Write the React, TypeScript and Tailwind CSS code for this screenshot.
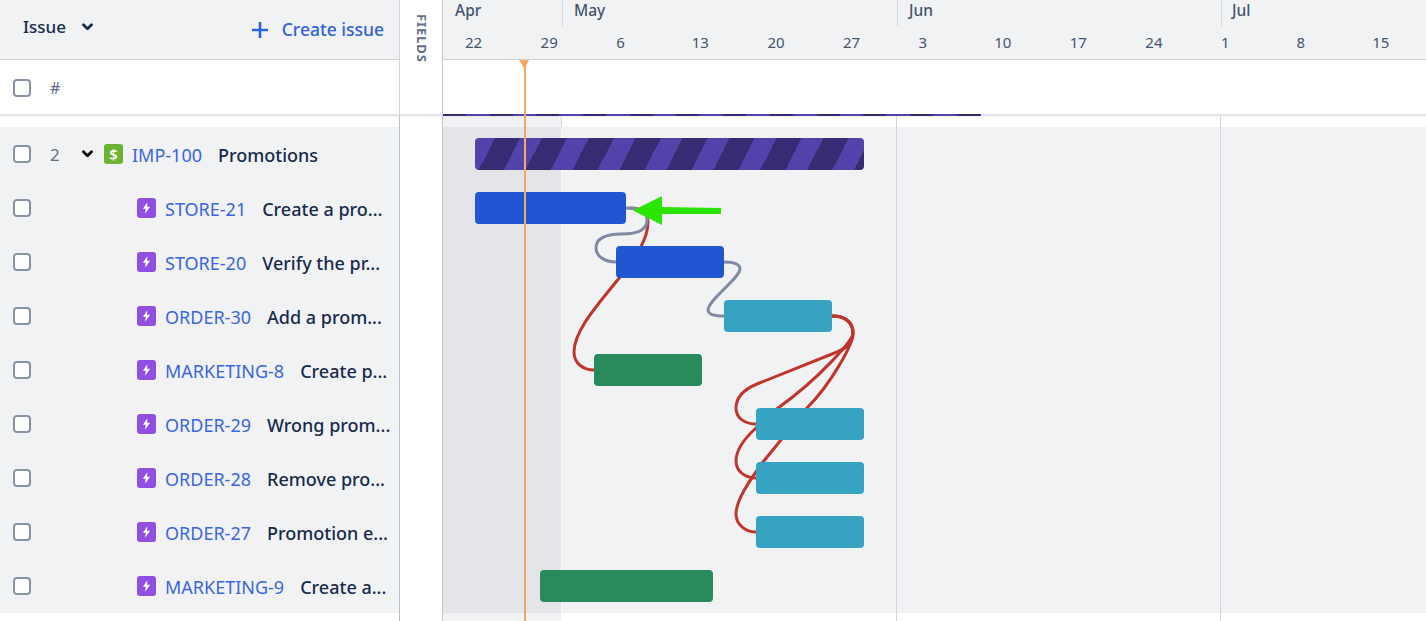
import React from "react";

const font = { fontFamily: '"Noto Sans", sans-serif' };

function Check() {
  return <span className="block w-[18px] h-[18px] rounded-[4px] border-2 border-[#8993a8] bg-white shrink-0" />;
}

function Chevron({ className }: { className: string }) {
  return (
    <svg viewBox="0 0 12 8" className={className} fill="none" stroke="currentColor" strokeWidth="3" strokeLinecap="round" strokeLinejoin="round">
      <path d="M1.6 1.6 L6 6 L10.4 1.6" />
    </svg>
  );
}

function Bolt() {
  return (
    <span className="w-[19px] h-[20px] rounded-[3px] bg-[#904ee2] flex items-center justify-center shrink-0">
      <svg viewBox="0 0 10 14" className="w-[9px] h-[12px]" fill="#fff">
        <path d="M6 0.4 L0.8 7.8 H4 L3.4 13.6 L9.2 5.6 H5.6 Z" />
      </svg>
    </span>
  );
}

const issues = [
  { k: "STORE-21", t: "Create a pro..." },
  { k: "STORE-20", t: "Verify the pr..." },
  { k: "ORDER-30", t: "Add a prom..." },
  { k: "MARKETING-8", t: "Create p..." },
  { k: "ORDER-29", t: "Wrong prom..." },
  { k: "ORDER-28", t: "Remove pro..." },
  { k: "ORDER-27", t: "Promotion e..." },
  { k: "MARKETING-9", t: "Create a..." },
];

const days = ["22", "29", "6", "13", "20", "27", "3", "10", "17", "24", "1", "8", "15"];

const stripe = "bg-[repeating-linear-gradient(117deg,#5243aa_0px,#5243aa_17.8px,#352c73_17.8px,#352c73_40.2px,#5243aa_40.2px,#5243aa_41.8px)]";

const bars = [
  { ml: "ml-[32px]", w: "w-[389px]", c: stripe },
  { ml: "ml-[32px]", w: "w-[151px]", c: "bg-[#2056d2]" },
  { ml: "ml-[173px]", w: "w-[108px]", c: "bg-[#2056d2]" },
  { ml: "ml-[281px]", w: "w-[108px]", c: "bg-[#37a3c2]" },
  { ml: "ml-[151px]", w: "w-[108px]", c: "bg-[#298a5c]" },
  { ml: "ml-[313px]", w: "w-[108px]", c: "bg-[#37a3c2]" },
  { ml: "ml-[313px]", w: "w-[108px]", c: "bg-[#37a3c2]" },
  { ml: "ml-[313px]", w: "w-[108px]", c: "bg-[#37a3c2]" },
  { ml: "ml-[97px]", w: "w-[173px]", c: "bg-[#298a5c]" },
];

const months = [
  { m: "Apr", c: "w-[119px] pl-[12px]" },
  { m: "May", c: "w-[335px] pl-[11px] border-l border-[#d5d7de]" },
  { m: "Jun", c: "w-[324px] pl-[11px] border-l border-[#d5d7de]" },
  { m: "Jul", c: "w-[205px] pl-[10px] border-l border-[#d5d7de]" },
];

function Left() {
  return (
    <div className="w-[400px] shrink-0 border-r border-[#b9bdc9] h-full flex flex-col">
      <div className="h-[60px] bg-[#f1f2f4] border-b border-[#d0d2da] flex items-center pl-[23px] pr-[15px] shrink-0">
        <span className="text-[17px] font-medium text-[#172b4d] -mt-[6px]">Issue</span>
        <Chevron className="w-[11px] h-[8px] ml-[16px] -mt-[6px] text-[#172b4d]" />
        <svg viewBox="0 0 16 16" className="w-[16px] h-[16px] ml-auto" fill="none" stroke="#2f62e0" strokeWidth="2.6">
          <path d="M8 0 V16 M0 8 H16" />
        </svg>
        <span className="ml-[14px] text-[17.5px] font-medium text-[#2f62e0]">Create issue</span>
      </div>
      <div className="h-[55px] bg-white flex items-center pl-[13px] shrink-0">
        <Check />
        <span className="ml-[19px] text-[16px] text-[#626f86]">#</span>
      </div>
      <div className="h-[12px] bg-white shrink-0" />
      <div className="h-[54px] bg-[#f1f2f4] flex items-center pl-[13px] shrink-0">
        <Check />
        <span className="ml-[19px] w-[32px] text-[17px] text-[#626f86] pt-[2px]">2</span>
        <Chevron className="w-[11px] h-[8px] text-black" />
        <span className="ml-[11px] w-[19px] h-[20px] rounded-[3px] bg-[#6ab42f] flex items-center justify-center text-white text-[15px] font-semibold leading-none shrink-0">$</span>
        <span className="ml-[9px] text-[18px] text-[#3a66e3] whitespace-nowrap pt-[2px]">IMP-100</span>
        <span className="ml-[16px] text-[18px] font-medium text-[#172b4d] whitespace-nowrap pt-[2px]">Promotions</span>
      </div>
      {issues.map((r) => (
        <div key={r.k} className="h-[54px] bg-[#f1f2f4] flex items-center pl-[13px] shrink-0">
          <Check />
          <span className="ml-[106px]"><Bolt /></span>
          <span className="ml-[9px] text-[18px] text-[#3a66e3] whitespace-nowrap pt-[2px]">{r.k}</span>
          <span className="ml-[16px] text-[18px] font-medium text-[#172b4d] whitespace-nowrap pt-[2px]">{r.t}</span>
        </div>
      ))}
    </div>
  );
}

function Fields() {
  return (
    <div className="w-[43px] shrink-0 border-r border-[#c4c7d1] h-full bg-white flex flex-col">
      <div className="h-[60px] flex justify-center pt-[14px] pl-[1px]">
        <span className="[writing-mode:vertical-rl] text-[13px] font-bold tracking-[0.9px] text-[#626f86] leading-none">FIELDS</span>
      </div>
    </div>
  );
}

function BarRows() {
  return (
    <>
      {bars.map((b, i) => (
        <div key={i} className="h-[54px] flex items-center relative">
          <div className={`${b.ml} ${b.w} ${b.c} h-[32px] rounded-[4px]`} />
        </div>
      ))}
    </>
  );
}

function Chart() {
  return (
    <div className="flex-1 h-full relative overflow-hidden">
      {/* header */}
      <div className="h-[60px] bg-[#f1f2f4] border-b border-[#d0d2da] flex flex-col">
        <div className="flex h-[26px]">
          {months.map(({ m, c }) => (
            <div key={m} className={`${c} text-[15.5px] font-medium text-[#44546f] leading-[21px]`}>{m}</div>
          ))}
        </div>
        <div className="flex pl-[22px] pt-[6px]">
          {days.map((d, i) => (
            <span key={i} className="w-[75.6px] shrink-0 text-[15px] text-[#44546f] leading-[21px]">{d}</span>
          ))}
        </div>
      </div>
      <div className="h-[67px] bg-white" />

      {/* rows area */}
      <div className="relative bg-[#f1f2f4] h-[486px]">
        <div className="absolute left-0 top-0 bottom-0 w-[118px] bg-[#e4e5e9]" />
      </div>
      <div className="h-[8px] bg-white" />
      <div className="absolute left-0 top-[613px] w-[118px] h-[8px] bg-[#f1f2f4]" />
      <div className="absolute left-0 top-[115px] w-[118px] h-[12px] bg-[#f1f2f4]" />

      {/* month grid lines */}
      <div className="absolute left-[118px] top-[115px] h-[12px] w-px bg-[#d5d6dc]" />
      <div className="absolute left-[118px] top-[127px] bottom-0 w-px bg-[#fafafb]" />
      <div className="absolute left-[453px] top-[115px] bottom-0 w-px bg-[#d5d6dc]" />
      <div className="absolute left-[777px] top-[115px] bottom-0 w-px bg-[#d5d6dc]" />

      {/* links */}
      <svg className="absolute left-0 top-0 w-[983px] h-[621px]" viewBox="443 0 983 621" fill="none" strokeWidth="3" strokeLinecap="round">
        <g stroke="#c1352a">
          <path d="M630 208 C 641 208 648 212 648 222 C 648 240 635 258 620 277 C 600 302 574 330 574 352 C 574 364 584 370 594 370" />
          <path d="M832 316 C 846 316 853 323 853 333 C 853 345 845 349 832 354 L 757 384 C 745 389 736 397 736 408 C 736 419 746 424 756 424" />
          <path d="M832 316 C 846 316 853 323 853 333 C 853 340 820 378 778 408 L 756 428 C 745 438 736 450 736 461 C 736 472 746 478 756 478" />
          <path d="M832 316 C 846 316 853 323 853 333 C 853 345 830 385 807 408 L 763 462 C 750 480 736 500 736 514 C 736 525 746 532 756 532" />
        </g>
        <g stroke="#7f8ba2">
          <path d="M626 208 C 640 208 647 212 647 220 C 647 232 632 234 622 234 C 605 234 596 238 596 248 C 596 257 606 262 616 262" />
          <path d="M724 262 C 734 262 740 264 740 269 C 740 278 708 300 708 310 C 708 314 714 316 724 316" />
        </g>
      </svg>

      {/* bars above links */}
      <div className="absolute left-0 right-0 top-[127px]">
        <BarRows />
      </div>

      {/* today marker + arrow */}
      <svg className="absolute left-0 top-0 w-[983px] h-[621px] z-10" viewBox="443 0 983 621">
        <rect x="524" y="66" width="2" height="555" fill="#fca55f" />
        <path d="M519 60 H529 L524.5 69 Z" fill="#fca55f" />
        <path d="M633 210.5 L662 196 V207 L721 208 V214 L662 214 V225 Z" fill="#2ae600" />
      </svg>
    </div>
  );
}

export default function App() {
  return (
    <div style={font} className="w-[1426px] h-[621px] overflow-hidden bg-white flex relative">
      <Left />
      <Fields />
      <Chart />
      <div className="absolute left-[399px] top-0 h-[114px] w-px bg-[#d5d6dc]" />
      <div className="absolute left-0 right-0 top-[114px] h-[4px] bg-gradient-to-b from-[#dcdde3] to-transparent" />
      <div className="absolute left-[443px] top-[114px] w-[538px] h-[2px] bg-[repeating-linear-gradient(90deg,#352c73_0px,#352c73_23px,#5243aa_23px,#5243aa_46.7px)]" />
    </div>
  );
}
